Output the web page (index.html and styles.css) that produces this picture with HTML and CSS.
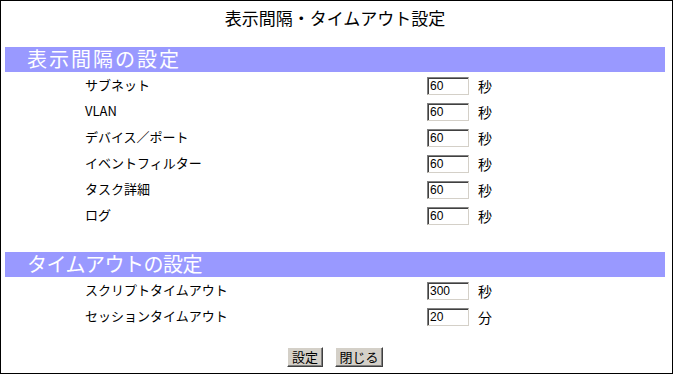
FILE: index.html
```html
<!DOCTYPE html>
<html lang="ja">
<head>
<meta charset="utf-8">
<title>表示間隔・タイムアウト設定</title>
<link rel="stylesheet" href="styles.css">
</head>
<body>
<div class="frame">
  <div class="title">表示間隔・タイムアウト設定</div>

  <div class="section first">
    <div class="bar bar-kanji">表示間隔の設定</div>
    <div class="rows">
      <div class="row"><span class="label">サブネット</span><input class="field" type="text" value="60"><span class="unit">秒</span></div>
      <div class="row"><span class="label">VLAN</span><input class="field" type="text" value="60"><span class="unit">秒</span></div>
      <div class="row"><span class="label">デバイス／ポート</span><input class="field" type="text" value="60"><span class="unit">秒</span></div>
      <div class="row"><span class="label">イベントフィルター</span><input class="field" type="text" value="60"><span class="unit">秒</span></div>
      <div class="row"><span class="label">タスク詳細</span><input class="field" type="text" value="60"><span class="unit">秒</span></div>
      <div class="row"><span class="label">ログ</span><input class="field" type="text" value="60"><span class="unit">秒</span></div>
    </div>
  </div>

  <div class="section second">
    <div class="bar bar-kana">タイムアウトの設定</div>
    <div class="rows">
      <div class="row"><span class="label">スクリプトタイムアウト</span><input class="field" type="text" value="300"><span class="unit">秒</span></div>
      <div class="row"><span class="label">セッションタイムアウト</span><input class="field" type="text" value="20"><span class="unit">分</span></div>
    </div>
  </div>

  <div class="buttons">
    <button class="btn btn-set" type="button">設定</button>
    <button class="btn btn-close" type="button">閉じる</button>
  </div>
</div>
</body>
</html>
```

FILE: styles.css
```css
html, body {
  margin: 0;
  padding: 0;
  background: #ffffff;
}

body {
  font-family: "Noto Sans CJK JP", "Liberation Sans", sans-serif;
  color: #000000;
}

.frame {
  box-sizing: border-box;
  width: 673px;
  height: 374px;
  border: 1px solid #000000;
  padding: 0 7px 0 4px;
}

.title {
  padding-top: 5px;
  height: 24px;
  line-height: 24px;
  font-size: 17px;
  text-align: center;
}

.section.first {
  margin-top: 17px;
}

.section.second {
  margin-top: 23px;
}

.bar {
  height: 25px;
  line-height: 24px;
  background: #9999ff;
  color: #ffffff;
  font-size: 20px;
  padding-left: 22px;
}

.bar-kanji {
  letter-spacing: 2px;
}

.bar-kana {
  letter-spacing: -0.5px;
}

.rows {
  padding-top: 1px;
}

.row {
  display: flex;
  align-items: center;
  height: 26px;
}

.label {
  width: 342px;
  margin-left: 80px;
  font-size: 13px;
  line-height: 16px;
  padding-bottom: 3px;
}

.field {
  box-sizing: border-box;
  width: 42px;
  height: 18px;
  margin: 0;
  padding: 0 0 0 2px;
  border: 1px solid;
  border-color: #808080 #d4d0c8 #d4d0c8 #808080;
  box-shadow: inset 1px 1px 0 #404040;
  font-family: "Liberation Sans", sans-serif;
  font-size: 12px;
  color: #000000;
  background: #ffffff;
  outline: none;
}

.unit {
  margin-left: 9px;
  font-size: 14px;
  line-height: 16px;
}

.buttons {
  display: flex;
  justify-content: center;
  gap: 12px;
  margin-top: 17px;
}

.btn {
  box-sizing: border-box;
  height: 20px;
  margin: 0;
  padding: 0;
  border: 1px solid;
  border-color: #ffffff #404040 #404040 #ffffff;
  box-shadow: inset -1px -1px 0 #808080;
  background: #d4d0c8;
  font-family: "Noto Sans CJK JP", sans-serif;
  font-size: 13px;
  line-height: 16px;
  color: #000000;
}

.btn-set {
  width: 36px;
}

.btn-close {
  width: 48px;
}
```
